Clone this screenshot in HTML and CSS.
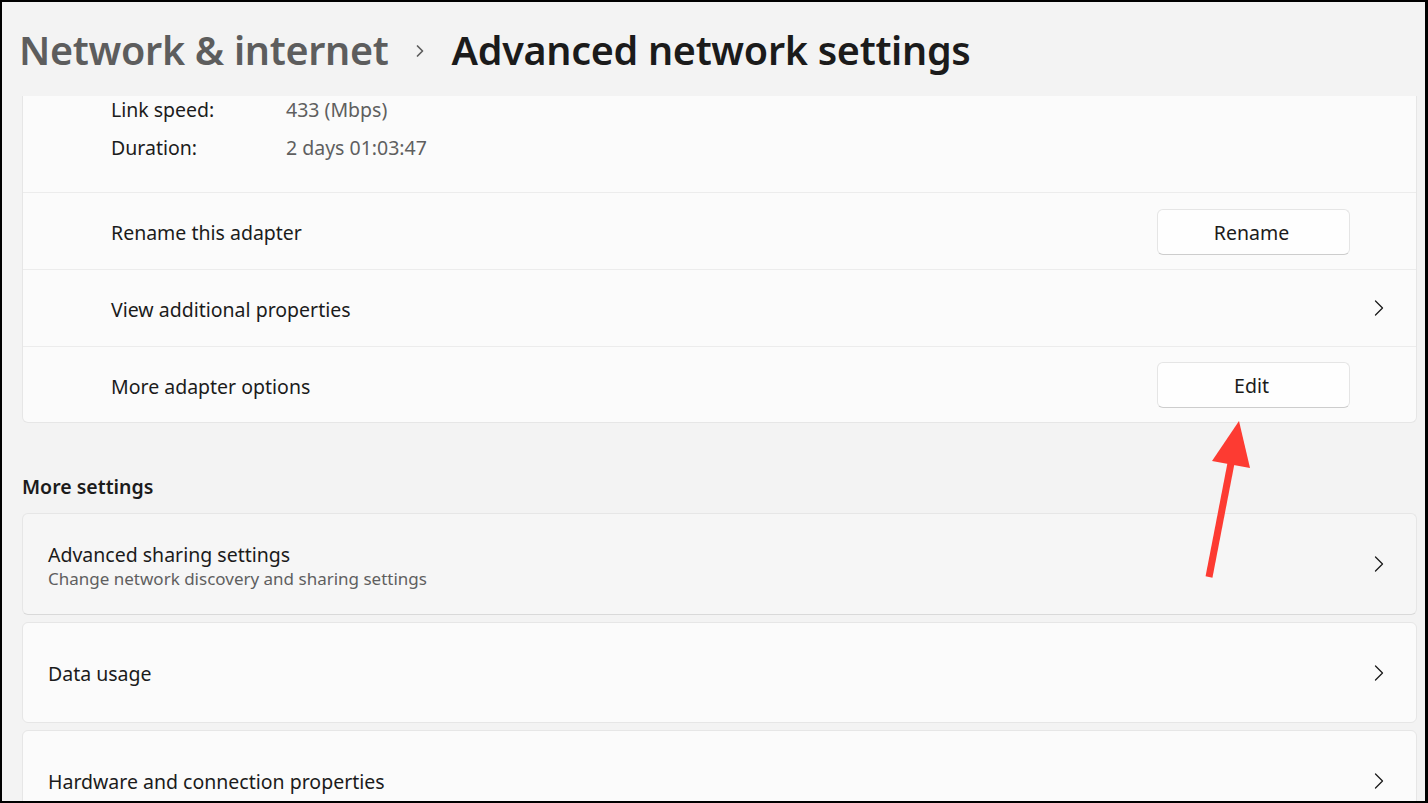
FILE: index.html
```html
<!DOCTYPE html>
<html lang="en">
<head>
<meta charset="utf-8">
<title>Advanced network settings</title>
<link rel="stylesheet" href="styles.css">
</head>
<body>
<div class="frame">
  <header class="header">
    <span class="crumb">Network &amp; internet</span>
    <svg class="crumb-sep" width="10" height="16" viewBox="0 0 10 16"><path d="M2.5 3 L7.5 8 L2.5 13" fill="none" stroke="#5d5d5d" stroke-width="1.7" stroke-linecap="round" stroke-linejoin="round"/></svg>
    <span class="title">Advanced network settings</span>
  </header>
  <main class="content">
    <section class="card adapter">
      <div class="info">
        <div class="info-line"><span class="info-label">Link speed:</span><span class="info-value">433 (Mbps)</span></div>
        <div class="info-line"><span class="info-label">Duration:</span><span class="info-value">2 days 01:03:47</span></div>
      </div>
      <div class="row">
        <span class="row-label">Rename this adapter</span>
        <button class="btn">Rename</button>
      </div>
      <div class="row row-link">
        <span class="row-label">View additional properties</span>
        <svg class="chev" width="10" height="16" viewBox="0 0 10 16"><path d="M1.5 1 L8.5 8 L1.5 15" fill="none" stroke="#1b1b1b" stroke-width="1.3" stroke-linecap="round" stroke-linejoin="round"/></svg>
      </div>
      <div class="row">
        <span class="row-label">More adapter options</span>
        <button class="btn">Edit</button>
      </div>
    </section>

    <h2 class="section-title">More settings</h2>

    <section class="card item item-hover">
      <div class="item-text">
        <span class="item-title">Advanced sharing settings</span>
        <span class="item-sub">Change network discovery and sharing settings</span>
      </div>
      <svg class="chev" width="10" height="16" viewBox="0 0 10 16"><path d="M1.5 1 L8.5 8 L1.5 15" fill="none" stroke="#1b1b1b" stroke-width="1.3" stroke-linecap="round" stroke-linejoin="round"/></svg>
    </section>
    <section class="card item">
      <div class="item-text"><span class="item-title">Data usage</span></div>
      <svg class="chev" width="10" height="16" viewBox="0 0 10 16"><path d="M1.5 1 L8.5 8 L1.5 15" fill="none" stroke="#1b1b1b" stroke-width="1.3" stroke-linecap="round" stroke-linejoin="round"/></svg>
    </section>
    <section class="card item">
      <div class="item-text"><span class="item-title">Hardware and connection properties</span></div>
      <svg class="chev" width="10" height="16" viewBox="0 0 10 16"><path d="M1.5 1 L8.5 8 L1.5 15" fill="none" stroke="#1b1b1b" stroke-width="1.3" stroke-linecap="round" stroke-linejoin="round"/></svg>
    </section>
  </main>
</div>
<svg class="annotation" width="1428" height="803" viewBox="0 0 1428 803">
  <line x1="1232" y1="458" x2="1209" y2="577" stroke="#fd3b32" stroke-width="7"/>
  <polygon points="1239,421 1212,461 1250,468" fill="#fd3b32"/>
</svg>
</body>
</html>
```
FILE: styles.css
```css
* { box-sizing: border-box; }
html, body { margin: 0; padding: 0; }
body {
  background: #000;
  width: 1428px;
  height: 803px;
  overflow: hidden;
  position: relative;
  font-family: "Noto Sans", "Open Sans", sans-serif;
  color: #1b1b1b;
}
.frame {
  margin: 2px 3px 0 2px;
  height: 799px;
  background: #f3f3f3;
  overflow: hidden;
}
.header {
  height: 94px;
  display: flex;
  align-items: center;
  padding: 2px 0 0 17px;
  font-weight: 600;
  font-size: 39.5px;
  letter-spacing: -0.3px;
}
.crumb { color: #5d5d5d; }
.crumb-sep { margin: 2px 27px 0 26px; }
.title { color: #1b1b1b; }

.content { padding: 0 8px 0 20px; }

.card {
  background: #fbfbfb;
  border: 1px solid #e6e6e6;
  border-radius: 6px;
}
.adapter {
  border-top: none;
  border-radius: 0 0 6px 6px;
}
.info {
  height: 97px;
  padding: 0 0 0 88px;
  border-bottom: 1px solid #ececec;
}
.info-line {
  height: 27px;
  display: flex;
  align-items: center;
  font-size: 19.5px;
  margin-bottom: 11px;
}
.info-label { width: 175px; color: #1b1b1b; }
.info-value { color: #5f5f5f; }

.row {
  height: 77px;
  display: flex;
  align-items: center;
  justify-content: space-between;
  padding: 0 66px 0 88px;
  border-bottom: 1px solid #ececec;
  font-size: 19.5px;
}
.row-label { padding-top: 3px; }
.row:last-child { border-bottom: none; height: 75px; }
.row-link { padding-right: 32px; }
.btn {
  width: 193px;
  height: 46px;
  margin-top: 1px;
  background: #fefefe;
  border: 1px solid #e5e5e5;
  border-bottom-color: #cdcdcd;
  border-radius: 6px;
  font-family: inherit;
  font-size: 19.5px;
  color: #1b1b1b;
  padding: 1px 4px 0 0;
}

.section-title {
  margin: 0;
  padding: 50px 0 12px 0;
  height: 90px;
  font-size: 19.5px;
  font-weight: 600;
  line-height: 28px;
  color: #1b1b1b;
}

.item {
  height: 101px;
  display: flex;
  align-items: center;
  justify-content: space-between;
  padding: 0 32px 0 25px;
  margin-bottom: 7px;
}
.item-hover {
  background: #f6f6f6;
  border-bottom-color: #d9d9d9;
  height: 102px;
}
.item-text { display: flex; flex-direction: column; padding-top: 3px; }
.item-title { font-size: 19.5px; line-height: 26px; }
.item-sub { font-size: 17px; line-height: 22px; color: #5f5f5f; }

.annotation {
  position: absolute;
  left: 0;
  top: 0;
  pointer-events: none;
}
```
